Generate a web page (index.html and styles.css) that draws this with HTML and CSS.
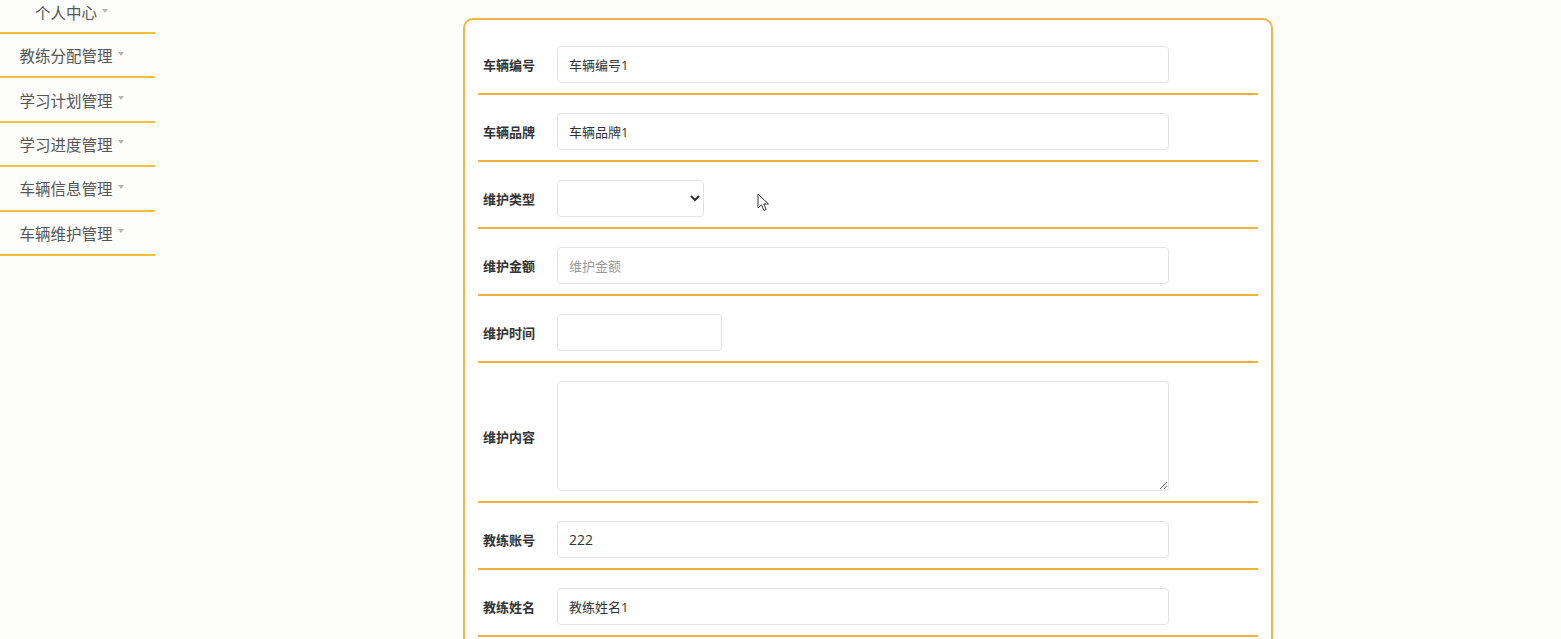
FILE: index.html
```html
<!DOCTYPE html>
<html lang="zh-CN">
<head>
    <meta charset="UTF-8">
    <meta name="viewport" content="width=device-width, initial-scale=1.0">
    <title>车辆维护管理</title>
    <link rel="stylesheet" href="styles.css">
</head>
<body>
    <!-- 左侧菜单 -->
    <ul class="side-menu">
        <li class="menu-item first"><a href="#">个人中心<span class="caret"></span></a></li>
        <li class="menu-item"><a href="#">教练分配管理<span class="caret"></span></a></li>
        <li class="menu-item"><a href="#">学习计划管理<span class="caret"></span></a></li>
        <li class="menu-item"><a href="#">学习进度管理<span class="caret"></span></a></li>
        <li class="menu-item"><a href="#">车辆信息管理<span class="caret"></span></a></li>
        <li class="menu-item"><a href="#">车辆维护管理<span class="caret"></span></a></li>
    </ul>

    <div class="main">
        <form class="form-card">
            <div class="form-row">
                <label class="form-label">车辆编号</label>
                <input class="form-input" type="text" value="车辆编号1">
            </div>
            <div class="form-row">
                <label class="form-label">车辆品牌</label>
                <input class="form-input" type="text" value="车辆品牌1">
            </div>
            <div class="form-row">
                <label class="form-label">维护类型</label>
                <select class="form-select">
                    <option></option>
                    <option>保养</option>
                    <option>维修</option>
                </select>
            </div>
            <div class="form-row">
                <label class="form-label">维护金额</label>
                <input class="form-input" type="text" placeholder="维护金额">
            </div>
            <div class="form-row">
                <label class="form-label">维护时间</label>
                <input class="form-input date" type="text">
            </div>
            <div class="form-row">
                <label class="form-label">维护内容</label>
                <textarea class="form-textarea"></textarea>
            </div>
            <div class="form-row">
                <label class="form-label">教练账号</label>
                <input class="form-input num" type="text" value="222">
            </div>
            <div class="form-row">
                <label class="form-label">教练姓名</label>
                <input class="form-input" type="text" value="教练姓名1">
            </div>
        </form>

        <!-- 鼠标指针 -->
        <svg class="pointer" width="13" height="19" viewBox="0 0 13 19">
            <path d="M1 1 L1 15 L4.5 11.8 L7 17.5 L9.2 16.5 L6.8 11 L11.5 11 Z" fill="#fff" stroke="#333" stroke-width="1" stroke-linejoin="round"/>
        </svg>
    </div>
</body>
</html>
```

FILE: styles.css
```css
html, body {
    overflow: hidden;
}

body {
    font-family: "Noto Sans CJK SC", "Noto Sans", sans-serif;
    background-color: #fdfdfc;
    margin: 0;
    padding: 0;
    display: flex;
    align-items: flex-start;
}

/* 左侧菜单 */
.side-menu {
    list-style-type: none;
    margin: 0;
    padding: 0;
    width: 155px;
    flex-shrink: 0;
}

.menu-item {
    border-bottom: 2px solid #f4bf3f;
}

.menu-item a {
    display: flex;
    align-items: center;
    justify-content: center;
    height: 42.4px;
    padding-right: 12px;
    color: #555;
    font-size: 15.5px;
    text-decoration: none;
}

.menu-item.first a {
    height: 24px;
    padding-bottom: 8px;
}

.caret {
    display: inline-block;
    width: 0;
    height: 0;
    margin-left: 5px;
    margin-top: -3px;
    border-top: 4px solid #b5b5b5;
    border-left: 3.5px solid transparent;
    border-right: 3.5px solid transparent;
}

/* 表单区域 */
.main {
    position: relative;
    flex: 1;
    padding-top: 18px;
    padding-left: 308px;
}

.form-card {
    width: 810px;
    box-sizing: border-box;
    background-color: #fff;
    border: 2px solid #f2b646;
    border-radius: 10px;
    padding: 8px 13px 10px;
}

.form-row {
    display: flex;
    align-items: center;
    padding: 18px 0 10px 5px;
    border-bottom: 2px solid #f1b33f;
}

.form-label {
    width: 74px;
    flex-shrink: 0;
    font-size: 13px;
    font-weight: bold;
    color: #333;
}

.form-input,
.form-select,
.form-textarea {
    box-sizing: border-box;
    height: 37px;
    border: 1px solid #e3e3e3;
    border-radius: 4px;
    background-color: #fff;
    font-family: "Open Sans", "Noto Sans CJK SC", sans-serif;
    font-size: 13px;
    color: #333;
    outline: none;
}

.form-input {
    width: 612px;
    padding: 0 11px;
}

.form-input::placeholder {
    color: #999;
}

.form-input.num {
    font-size: 14px;
}

.form-input.date {
    width: 165px;
}

.form-select {
    width: 147px;
    padding: 0 8px;
}

.form-textarea {
    display: block;
    width: 612px;
    height: 110px;
    padding: 8px 11px;
}

.pointer {
    position: absolute;
    left: 602px;
    top: 193px;
}
```
